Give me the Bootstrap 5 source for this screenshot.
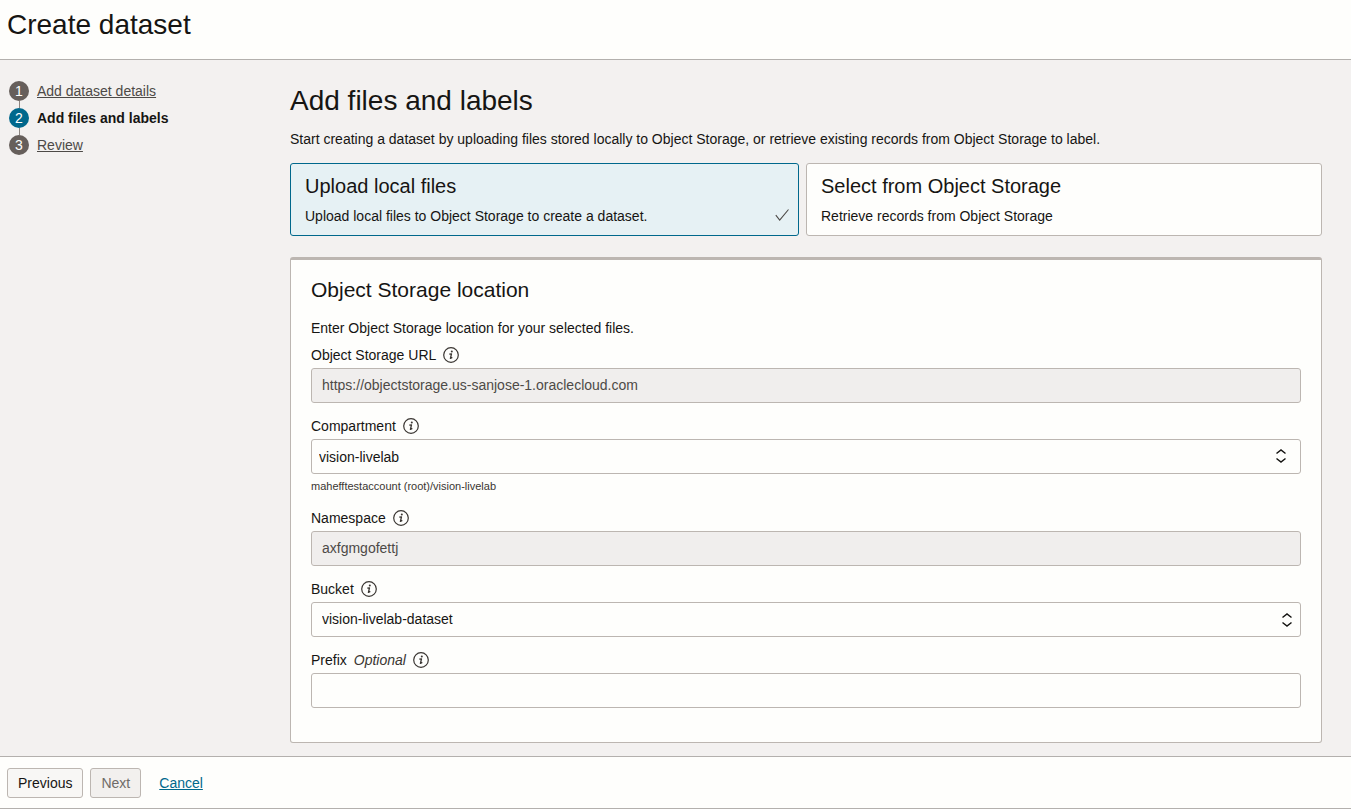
<!DOCTYPE html>
<html lang="en">
<head>
<meta charset="utf-8">
<meta name="viewport" content="width=device-width, initial-scale=1">
<title>Create dataset</title>
<link href="https://cdn.jsdelivr.net/npm/bootstrap@5.3.0/dist/css/bootstrap.min.css" rel="stylesheet">
<style>
  :root { --ink: #161513; --muted-ink: #4d4a47; --line: #bcb6b1; --paper: #fefefc; --canvas: #f3f1f0; --accent: #00688c; }
  body { font-family: "Liberation Sans", Arial, sans-serif; font-size: 14px; line-height: 20px; color: var(--ink); background: var(--canvas); }
  .page-title { font-size: 28px; line-height: 34px; font-weight: 400; }
  .page-header { background: var(--paper); border-bottom: 1px solid #b3b0ad; padding: 8px 7px 17px; }
  .steps { width: 290px; padding: 21px 9px; }
  .step { gap: 8px; margin-bottom: 7px; }
  .step a { color: var(--muted-ink); }
  .step-number { position: relative; width: 20px; height: 20px; background: #665f5b; color: #fff; }
  .step.active .step-number { background: var(--accent); }
  .step:not(:last-child) .step-number::after { content: ""; position: absolute; top: 100%; left: 50%; width: 1px; height: 7px; background: #8b8580; }
  .wizard-main { padding: 24px 29px 13px 0; min-width: 0; }
  .intro { margin: 11px 0 14px; }
  .source-options { display: grid; grid-template-columns: 509fr 516fr; gap: 7px; margin-bottom: 21px; }
  .source-option { position: relative; border: 1px solid var(--line); border-radius: 3px; background: var(--paper); padding: 10px 14px 9px; cursor: pointer; }
  .source-title { font-size: 20px; line-height: 24px; margin-bottom: 8px; }
  .source-check { position: absolute; right: 9px; bottom: 13px; display: none; }
  .btn-check:checked + .source-option { background: #e6f1f4; border-color: var(--accent); }
  .btn-check:checked + .source-option .source-check { display: block; }
  .location-panel { background: var(--paper); border: 1px solid var(--line); border-top: 3px solid #bcb6b1; border-radius: 3px; padding: 16px 20px 34px; }
  .panel-title { font-size: 21px; line-height: 28px; font-weight: 400; margin-bottom: 14px; }
  .location-panel p { margin-bottom: 7px; }
  .field + .field { margin-top: 13px; }
  .field-head { gap: 7px; margin-bottom: 3px; }
  .field-head em { color: #3a3632; }
  .info-button { width: 16px; height: 16px; color: #3a3632; }
  .field .form-control, .field .form-select { height: 35px; border-color: var(--line); border-radius: 3px; background-color: var(--paper); color: var(--ink); font-size: 14px; line-height: 20px; padding: 5px 10px 7px; }
  .field .form-control:disabled { background-color: #f0eeed; color: var(--muted-ink); opacity: 1; }
  .field .form-select { background-image: url("data:image/svg+xml,%3Csvg xmlns='http://www.w3.org/2000/svg' viewBox='0 0 12 16'%3E%3Cpath d='M1.5 5.5 6 2l4.5 3.5M1.5 10.5 6 14l4.5-3.5' fill='none' stroke='%23161513' stroke-width='1.5'/%3E%3C/svg%3E"); background-size: 12px 16px; background-position: right 7px center; padding-right: 28px; }
  .field .select-inset { padding: 6px 28px 6px 7px; background-position: right 13px top 8px; }
  .field-hint { font-size: 11px; line-height: 18px; margin-top: 3px; color: #3a3632; }
  .wizard-footer { background: var(--paper); border-top: 1px solid #b3b0ad; border-bottom: 1px solid #b3b0ad; padding: 11px 7px 10px; gap: 7px; }
  .wizard-footer .btn { height: 30px; font-size: 14px; line-height: 20px; padding: 4px 10px; border: 1px solid var(--line); border-radius: 3px; background: #f8f7f5; color: var(--ink); }
  .wizard-footer .btn:disabled { background: #f2f0ee; color: #6f6b68; opacity: 1; }
  .wizard-footer a { color: var(--accent); margin-left: 11px; }
</style>
</head>
<body class="d-flex flex-column min-vh-100">
  <svg class="d-none" aria-hidden="true">
    <symbol id="info" viewBox="0 0 16 16">
      <circle cx="8" cy="8" r="7.3" fill="none" stroke="currentColor" stroke-width="1.2"/>
      <circle cx="8.8" cy="4.6" r="1" fill="currentColor"/>
      <path d="M6.3 7.2 8.5 6.8 7.4 11.3 9.3 10.3" fill="none" stroke="currentColor" stroke-width="1.3" stroke-linejoin="round"/>
    </symbol>
  </svg>

  <header class="page-header"><h1 class="page-title m-0">Create dataset</h1></header>

  <div class="d-flex flex-grow-1">
    <nav class="steps flex-shrink-0" aria-label="Steps">
      <ol class="list-unstyled m-0">
        <li class="step d-flex"><span class="step-number rounded-circle text-center">1</span><a href="#">Add dataset details</a></li>
        <li class="step active d-flex" aria-current="step"><span class="step-number rounded-circle text-center">2</span><strong>Add files and labels</strong></li>
        <li class="step d-flex"><span class="step-number rounded-circle text-center">3</span><a href="#">Review</a></li>
      </ol>
    </nav>

    <main class="wizard-main flex-grow-1">
      <h2 class="page-title mb-0">Add files and labels</h2>
      <p class="intro">Start creating a dataset by uploading files stored locally to Object Storage, or retrieve existing records from Object Storage to label.</p>

      <div class="source-options">
        <input class="btn-check" type="radio" name="source" id="source-local" checked>
        <label class="source-option" for="source-local">
          <span class="source-title d-block">Upload local files</span>
          <span class="d-block">Upload local files to Object Storage to create a dataset.</span>
          <svg class="source-check" width="14" height="14" viewBox="0 0 14 14" aria-hidden="true"><path d="M.8 7.2 4.7 12.2 13.5 1.5" fill="none" stroke="#4d4a47" stroke-width="1.1"/></svg>
        </label>
        <input class="btn-check" type="radio" name="source" id="source-storage">
        <label class="source-option" for="source-storage">
          <span class="source-title d-block">Select from Object Storage</span>
          <span class="d-block">Retrieve records from Object Storage</span>
        </label>
      </div>

      <section class="location-panel">
        <h3 class="panel-title">Object Storage location</h3>
        <p>Enter Object Storage location for your selected files.</p>
        <div class="field">
          <div class="field-head d-flex align-items-center">
            <label for="url">Object Storage URL</label>
            <button type="button" class="info-button btn border-0 p-0 d-flex" aria-label="About Object Storage URL"><svg width="16" height="16"><use href="#info"/></svg></button>
          </div>
          <input class="form-control" id="url" type="text" value="https://objectstorage.us-sanjose-1.oraclecloud.com" disabled>
        </div>
        <div class="field">
          <div class="field-head d-flex align-items-center">
            <label for="compartment">Compartment</label>
            <button type="button" class="info-button btn border-0 p-0 d-flex" aria-label="About Compartment"><svg width="16" height="16"><use href="#info"/></svg></button>
          </div>
          <select class="form-select select-inset" id="compartment"><option>vision-livelab</option></select>
          <div class="field-hint">mahefftestaccount (root)/vision-livelab</div>
        </div>
        <div class="field">
          <div class="field-head d-flex align-items-center">
            <label for="namespace">Namespace</label>
            <button type="button" class="info-button btn border-0 p-0 d-flex" aria-label="About Namespace"><svg width="16" height="16"><use href="#info"/></svg></button>
          </div>
          <input class="form-control" id="namespace" type="text" value="axfgmgofettj" disabled>
        </div>
        <div class="field">
          <div class="field-head d-flex align-items-center">
            <label for="bucket">Bucket</label>
            <button type="button" class="info-button btn border-0 p-0 d-flex" aria-label="About Bucket"><svg width="16" height="16"><use href="#info"/></svg></button>
          </div>
          <select class="form-select" id="bucket"><option>vision-livelab-dataset</option></select>
        </div>
        <div class="field">
          <div class="field-head d-flex align-items-center">
            <label for="prefix">Prefix</label>
            <em>Optional</em>
            <button type="button" class="info-button btn border-0 p-0 d-flex" aria-label="About Prefix"><svg width="16" height="16"><use href="#info"/></svg></button>
          </div>
          <input class="form-control" id="prefix" type="text">
        </div>
      </section>
    </main>
  </div>

  <footer class="wizard-footer d-flex align-items-center">
    <button type="button" class="btn">Previous</button>
    <button type="button" class="btn" disabled>Next</button>
    <a href="#">Cancel</a>
  </footer>
<script src="https://cdn.jsdelivr.net/npm/bootstrap@5.3.0/dist/js/bootstrap.bundle.min.js"></script>
</body>
</html>
